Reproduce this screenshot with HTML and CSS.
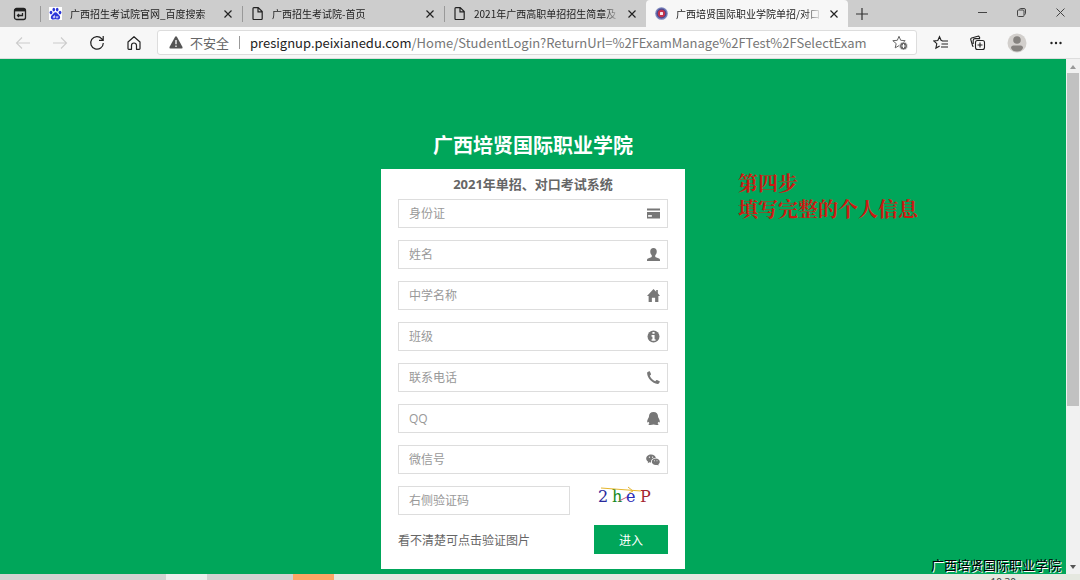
FILE: index.html
```html
<!DOCTYPE html>
<html lang="zh-CN">

<head>
    <meta charset="UTF-8">
    <meta name="viewport" content="width=device-width, initial-scale=1.0">
    <title>广西培贤国际职业学院单招/对口考试系统</title>
    <link rel="stylesheet" href="styles.css">
</head>

<body>
    <header class="tabs">
        <button class="tab-menu" type="button" aria-label="标签页操作">
            <svg width="14" height="14" viewBox="0 0 14 14" fill="none" stroke="#222" stroke-width="1.3">
                <rect x="1.5" y="1.5" width="11" height="11" rx="2" />
                <path d="M1.5 3.2h11" stroke-width="2.4" />
                <path d="M9.5 6v2.5h-5M6 7L4.500 8.500 6 10" />
            </svg>
        </button>
        <div class="tab">
            <svg class="tab-icon" width="13" height="13" viewBox="0 0 13 13">
                <rect width="13" height="13" fill="#fff" />
                <g fill="#2b35d8">
                    <ellipse cx="2" cy="5.600" rx="1.400" ry="1.800" />
                    <ellipse cx="4.800" cy="2.600" rx="1.300" ry="1.900" />
                    <ellipse cx="8.200" cy="2.600" rx="1.300" ry="1.900" />
                    <ellipse cx="11" cy="5.600" rx="1.400" ry="1.800" />
                    <path d="M6.500 5.200c1.700 0 2 1.500 3.200 2.500 2.400 2 1.500 4.800-.6 4.800-1 0-1.500-.3-2.600-.3s-1.600.3-2.600.3c-2.100 0-3-2.800-.6-4.800C4.500 6.700 4.800 5.200 6.500 5.200z" />
                </g>
                <path d="M5.500 8.300v2.500H4.300V9.500h1M7.200 9v1.800h1.600V9" fill="none" stroke="#fff" stroke-width=".7" />
            </svg>
            <span class="tab-title">广西招生考试院官网_百度搜索</span>
            <button class="tab-close" type="button" aria-label="关闭">
                <svg width="8" height="8" viewBox="0 0 8 8"><path d="M.5.5l7 7m0-7l-7 7" stroke="#222" stroke-width="1.2" /></svg>
            </button>
        </div>
        <div class="tab">
            <svg class="tab-icon" width="13" height="13" viewBox="0 0 13 13" fill="none" stroke="#222" stroke-width="1.2">
                <path d="M2 1.500q0-.9.9-.9h4.300l4 4v7q0 .9-.9.9H2.900q-.9 0-.9-.9zM7 .600v4.200h4.200" />
            </svg>
            <span class="tab-title">广西招生考试院-首页</span>
            <button class="tab-close" type="button" aria-label="关闭">
                <svg width="8" height="8" viewBox="0 0 8 8"><path d="M.5.5l7 7m0-7l-7 7" stroke="#222" stroke-width="1.2" /></svg>
            </button>
        </div>
        <div class="tab">
            <svg class="tab-icon" width="13" height="13" viewBox="0 0 13 13" fill="none" stroke="#222" stroke-width="1.2">
                <path d="M2 1.500q0-.9.9-.9h4.300l4 4v7q0 .9-.9.9H2.900q-.9 0-.9-.9zM7 .600v4.200h4.200" />
            </svg>
            <span class="tab-title">2021年广西高职单招招生简章及</span>
            <button class="tab-close" type="button" aria-label="关闭">
                <svg width="8" height="8" viewBox="0 0 8 8"><path d="M.5.5l7 7m0-7l-7 7" stroke="#222" stroke-width="1.2" /></svg>
            </button>
        </div>
        <div class="tab active">
            <svg class="tab-icon" width="13" height="13" viewBox="0 0 13 13">
                <circle cx="6.500" cy="6.500" r="6.300" fill="#7d86bd" />
                <circle cx="6.500" cy="6.500" r="5" fill="#4a4a92" />
                <circle cx="6.500" cy="6.500" r="3.700" fill="#c3334d" />
                <rect x="5" y="5" width="3" height="3" rx=".5" fill="#fbe9ec" />
            </svg>
            <span class="tab-title">广西培贤国际职业学院单招/对口</span>
            <button class="tab-close" type="button" aria-label="关闭">
                <svg width="8" height="8" viewBox="0 0 8 8"><path d="M.5.5l7 7m0-7l-7 7" stroke="#222" stroke-width="1.2" /></svg>
            </button>
        </div>
        <button class="new-tab" type="button" aria-label="新建标签页">
            <svg width="12" height="12" viewBox="0 0 12 12"><path d="M6 0v12M0 6h12" stroke="#333" stroke-width="1.2" /></svg>
        </button>
        <div class="window-buttons">
            <button type="button" aria-label="最小化">
                <svg width="9" height="9" viewBox="0 0 9 9"><path d="M0 4.500h9" stroke="#444" /></svg>
            </button>
            <button type="button" aria-label="还原">
                <svg width="9" height="9" viewBox="0 0 9 9" fill="none" stroke="#444">
                    <rect x=".5" y="2" width="6.500" height="6.500" rx="1" />
                    <path d="M2.500 1.500q0-1 1-1H7q1.500 0 1.500 1.500v3.500q0 1-1 1" />
                </svg>
            </button>
            <button type="button" aria-label="关闭窗口">
                <svg width="9" height="9" viewBox="0 0 9 9"><path d="M.5.5l8 8m0-8l-8 8" stroke="#444" /></svg>
            </button>
        </div>
    </header>

    <nav class="toolbar">
        <div class="nav-buttons">
            <button type="button" aria-label="后退" disabled>
                <svg width="16" height="16" viewBox="0 0 16 16" fill="none" stroke="#ccc" stroke-width="1.100"><path d="M15 8H2m5-5.500L1.500 8 7 13.500" /></svg>
            </button>
            <button type="button" aria-label="前进" disabled>
                <svg width="16" height="16" viewBox="0 0 16 16" fill="none" stroke="#ccc" stroke-width="1.100"><path d="M1 8h13M9 2.500L14.500 8 9 13.500" /></svg>
            </button>
            <button type="button" aria-label="刷新">
                <svg width="16" height="16" viewBox="0 0 16 16" fill="none" stroke="#222" stroke-width="1.200"><path d="M14.300 8a6.300 6.300 0 1 1-1.500-4.200L14 5.200M14.200 1v4.300H10" /></svg>
            </button>
            <button type="button" aria-label="主页">
                <svg width="16" height="16" viewBox="0 0 16 16" fill="none" stroke="#222" stroke-width="1.200" stroke-linejoin="round"><path d="M2 7l6-5.300L14 7v6.500q0 .8-.8.8h-2.700V10.500a2.500 2.500 0 0 0-5 0v3.800H2.800q-.8 0-.8-.8z" /></svg>
            </button>
        </div>
        <div class="address">
            <svg width="14" height="13" viewBox="0 0 14 13"><path d="M7 .3q.6 0 1 .7l5.500 10q.5 1.500-1 1.500h-11q-1.500 0-1-1.500L6 1q.4-.7 1-.7z" fill="#555" /><path d="M7 4v4.200M7 9.500V11" stroke="#fff" stroke-width="1.300" /></svg>
            <span class="insecure">不安全</span>
            <span class="url"><b>presignup.peixianedu.com</b>/Home/StudentLogin?ReturnUrl=%2FExamManage%2FTest%2FSelectExam</span>
            <button class="favourite" type="button" aria-label="添加到收藏夹">
                <svg width="16" height="16" viewBox="0 0 16 16"><path d="M7 1.300l1.700 4 4.500.4-3.400 2.900 1 4.200L7 10.600l-3.800 2.300 1-4.300L.8 5.700l4.500-.4z" fill="none" stroke="#666" /><circle cx="11.500" cy="11" r="4" fill="#666" stroke="#fff" stroke-width=".7" /><path d="M11.500 9v4m-2-2h4" stroke="#fff" /></svg>
            </button>
        </div>
        <div class="tools">
            <button type="button" aria-label="收藏夹">
                <svg width="16" height="16" viewBox="0 0 16 16" fill="none" stroke="#222" stroke-width="1.100"><path d="M9.500 5.700L8.200 5.500 6.500 1.700 4.800 5.500l-4 .4 3 2.800-.9 4.400 3.800-2.200M9 6h6M8.500 9h6.500M8 12h7" /></svg>
            </button>
            <button type="button" aria-label="集锦">
                <svg width="16" height="16" viewBox="0 0 16 16" fill="none" stroke="#222" stroke-width="1.100"><rect x="5.500" y="5.500" width="9" height="9" rx="2" /><path d="M10 7.500v5M7.500 10h5M3.500 11.500q-.8-.2-1-1L.8 4.700Q.4 3.400 1.600 2.900L7.800 1.200q1.200-.2 1.600.9l.5 1.200M3.200 9V5.500q0-1.900 1.900-1.900h5" /></svg>
            </button>
            <button type="button" aria-label="个人资料">
                <svg width="20" height="20" viewBox="0 0 20 20"><circle cx="10" cy="10" r="9.500" fill="#d2cfcc" /><circle cx="10" cy="7" r="3.800" fill="#85827f" /><path d="M4 15q0-2.500 2.500-2.500h7Q16 12.500 16 15q-1.500 3.500-6 3.500T4 15z" fill="#85827f" /></svg>
            </button>
            <button type="button" aria-label="设置及其他">
                <svg width="16" height="16" viewBox="0 0 16 16" fill="#222"><circle cx="3.500" cy="8" r="1.200" /><circle cx="8" cy="8" r="1.200" /><circle cx="12.500" cy="8" r="1.200" /></svg>
            </button>
        </div>
    </nav>

    <div class="viewport">
        <main class="page">
            <h1>广西培贤国际职业学院</h1>
            <form class="login-box" method="post">
                <h2>2021年单招、对口考试系统</h2>
                <div class="field">
                    <input type="text" placeholder="身份证" aria-label="身份证">
                    <svg width="13" height="13" viewBox="0 0 12 12" fill="#777"><path d="M0 1.300h12v1.900H0zM0 4.500h12v6H0z" /><path d="M1 7.500h3.500v1.500H1z" fill="#fff" /></svg>
                </div>
                <div class="field">
                    <input type="text" placeholder="姓名" aria-label="姓名">
                    <svg width="13" height="13" viewBox="0 0 12 12" fill="#777"><path d="M6 0c2 0 3 1.300 3 3.200 0 1.500-.6 2.700-1.400 3.500v1.100q0 .5.500.7l3 1.200q.9.400.9 1.300v1H0v-1q0-.9.900-1.300l3-1.200q.5-.2.500-.7V6.700C3.600 5.900 3 4.700 3 3.200 3 1.300 4 0 6 0z" /></svg>
                </div>
                <div class="field">
                    <input type="text" placeholder="中学名称" aria-label="中学名称">
                    <svg width="13" height="13" viewBox="0 0 12 12" fill="#777"><path d="M6 0l2.500 2.500V1H10v3l2 2.500h-1.500V12h-3V8h-3v4h-3V6.500H0z" /></svg>
                </div>
                <div class="field">
                    <input type="text" placeholder="班级" aria-label="班级">
                    <svg width="13" height="13" viewBox="0 0 12 12"><circle cx="6" cy="6" r="5.500" fill="#777" /><path d="M5 1.800h2v1.700H5zM4.200 4.700H7v3.800h.9V10H4.200V8.500H5V6.200h-.8z" fill="#fff" /></svg>
                </div>
                <div class="field">
                    <input type="tel" placeholder="联系电话" aria-label="联系电话">
                    <svg width="13" height="13" viewBox="0 0 12 12" fill="#777"><path d="M.3 1.200L2 .2q.4-.2.7.2l1 2.400q.1.400-.2.700l-.9.800c.9 2.300 2.700 4.100 5 5.200l.9-1q.3-.3.700-.1l2.400 1.100q.4.300.2.700l-.9 1.300q-.4.500-1 .4C4.600 11.200.5 6.800.1 2q-.1-.5.200-.8z" /></svg>
                </div>
                <div class="field">
                    <input type="text" placeholder="QQ" aria-label="QQ">
                    <svg width="13" height="13" viewBox="0 0 12 12" fill="#777"><path d="M6 0c2.700 0 4.200 1.700 4.200 4.100 0 .5.100.8.400 1.300.7 1.300 1.300 2.500 1.200 3.700 0 .7-.7.600-1.300-.1-.1.600-.4 1-.8 1.400.7.300 1 .7.900 1.100-.3.700-3.200.6-4.600.1-1.400.5-4.300.6-4.600-.1-.1-.4.200-.8.900-1.100-.4-.4-.7-.8-.8-1.400-.6.700-1.300.8-1.300.1-.1-1.200.5-2.400 1.200-3.700.3-.5.400-.8.400-1.300C1.800 1.700 3.300 0 6 0z" /></svg>
                </div>
                <div class="field">
                    <input type="text" placeholder="微信号" aria-label="微信号">
                    <svg width="14" height="12" viewBox="0 0 14 12"><path d="M5 .5c2.600 0 4.500 1.600 4.800 3.400-3 0-5.300 2.100-4.700 4.600-.7 0-1.100-.1-1.700-.2L1.700 9.200l.4-1.500C.9 6.900.2 5.900.2 4.600.2 2.300 2.400.5 5 .5z" fill="#777" /><path d="M9.800 4.400c2.200 0 4 1.500 4 3.400 0 1-.6 1.900-1.500 2.600l.4 1.200-1.400-.7c-.5.100-1 .2-1.500.2-2.300 0-4-1.500-4-3.300s1.700-3.400 4-3.400z" fill="#777" /><g fill="#fff"><circle cx="3.400" cy="3.200" r=".6" /><circle cx="6.600" cy="3.200" r=".6" /><circle cx="8.500" cy="6.700" r=".5" /><circle cx="11" cy="6.700" r=".5" /></g></svg>
                </div>
                <div class="captcha-row">
                    <div class="field">
                        <input type="text" placeholder="右侧验证码" aria-label="右侧验证码">
                    </div>
                    <button class="captcha" type="button" aria-label="验证码">
                        <svg width="74" height="20" viewBox="0 0 74 20">
                            <g class="captcha-text">
                                <text x="4" y="16" fill="#2a2a9c">2</text>
                                <text x="18" y="16" fill="#15881c">h</text>
                                <text x="32" y="16" fill="#2a2ab8">e</text>
                                <text x="46" y="16" fill="#a42430">P</text>
                            </g>
                            <path d="M7 2l40 3M34 1l5 4-4 2" fill="none" stroke="#e5b62d" />
                            <path d="M25 15l8-4" stroke="#c55a7a" />
                        </svg>
                    </button>
                </div>
                <div class="submit-row">
                    <span>看不清楚可点击验证图片</span>
                    <button class="submit" type="submit">进入</button>
                </div>
            </form>
            <p class="note">第四步<br>填写完整的个人信息</p>
        </main>
        <div class="scrollbar">
            <svg width="6" height="4" viewBox="0 0 6 4"><path d="M3 0l3 4H0z" fill="#999" /></svg>
            <div class="thumb"></div>
            <svg width="6" height="4" viewBox="0 0 6 4"><path d="M0 0h6L3 4z" fill="#555" /></svg>
        </div>
    </div>

    <footer class="taskbar">
        <span class="task-search"></span>
        <span class="task-view"></span>
        <span class="task-items"></span>
        <span class="task-alert"></span>
        <time>10:30</time>
    </footer>
    <div class="watermark">广西培贤国际职业学院</div>
</body>

</html>
```
FILE: styles.css
```css
* {
    box-sizing: border-box;
}

body {
    margin: 0;
    height: 100vh;
    display: flex;
    flex-direction: column;
    overflow: hidden;
    font-family: "Open Sans", "Noto Sans CJK SC", sans-serif;
    font-size: 12px;
    background: #f7f7f7;
}

button {
    display: flex;
    align-items: center;
    justify-content: center;
    padding: 0;
    border: none;
    background: none;
    font-family: inherit;
    cursor: pointer;
}

svg {
    display: block;
    flex: none;
}

/* Tab strip */
.tabs {
    display: flex;
    flex: none;
    height: 27px;
    background: #cdcdcd;
}

.tab-menu {
    width: 40px;
}

.tab {
    display: flex;
    align-items: center;
    flex: 0 1 202px;
    min-width: 0;
    padding: 0 10px 0 9px;
    background: linear-gradient(#999, #999) left center / 1px 16px no-repeat;
}

.tab.active {
    background: #f7f7f7;
    border-radius: 4px 4px 0 0;
}

.tab-title {
    flex: 1;
    margin: 0 8px;
    overflow: hidden;
    white-space: nowrap;
    font-family: "Noto Sans CJK SC", sans-serif;
    font-size: 10px;
    line-height: 16px;
    color: #222;
    -webkit-mask-image: linear-gradient(to left, transparent, #000 16px);
    mask-image: linear-gradient(to left, transparent, #000 16px);
}

.tab-close {
    width: 8px;
    height: 16px;
}

.new-tab {
    width: 28px;
}

.window-buttons {
    display: flex;
    margin-left: auto;
}

.window-buttons button {
    width: 39px;
    height: 24px;
}

/* Toolbar */
.toolbar {
    display: flex;
    align-items: center;
    flex: none;
    height: 32px;
    border-bottom: 1px solid #ddd;
}

.nav-buttons {
    display: flex;
    gap: 21px;
    padding: 0 15px;
}

.address {
    display: flex;
    align-items: center;
    flex: 1;
    min-width: 0;
    height: 25px;
    padding: 0 8px 0 11px;
    background: #fff;
    border: 1px solid #ddd;
    border-radius: 3px;
    font-size: 13px;
    line-height: 18px;
    white-space: nowrap;
}

.insecure {
    margin-left: 7px;
    padding-right: 11px;
    color: #666;
    background: linear-gradient(#999, #999) right center / 1px 13px no-repeat;
}

.url {
    flex: 1;
    margin-left: 10px;
    overflow: hidden;
    font-family: "Noto Sans CJK SC", sans-serif;
    color: #777;
}

.url b {
    font-weight: normal;
    color: #222;
}

.tools {
    display: flex;
    align-items: center;
    gap: 21px;
    padding: 0 16px;
}

/* Login page */
.viewport {
    display: flex;
    flex: 1;
    min-height: 0;
}

.page {
    position: relative;
    flex: 1;
    padding-top: 71px;
    overflow: hidden;
    background: #00a65a;
}

h1 {
    margin: 0 0 7px;
    font-size: 20px;
    line-height: 32px;
    text-align: center;
    color: #fff;
}

.login-box {
    width: 304px;
    margin: 0 auto;
    padding: 5px 17px 15px;
    background: #fff;
    color: #666;
}

h2 {
    margin: 0 0 5px;
    font-size: 13px;
    line-height: 20px;
    text-align: center;
}

.field {
    display: flex;
    align-items: center;
    height: 29px;
    margin-bottom: 12px;
    padding: 0 7px 0 10px;
    border: 1px solid #ddd;
}

.field input {
    flex: 1;
    min-width: 0;
    padding: 0;
    border: none;
    outline: none;
    background: none;
    font-family: inherit;
    font-size: 12px;
    color: #555;
}

.field input::placeholder {
    color: #999;
}

.captcha-row {
    display: flex;
    justify-content: space-between;
}

.captcha-row .field {
    width: 172px;
    margin-bottom: 10px;
}

.captcha {
    width: 74px;
    height: 20px;
}

.captcha-text {
    font-family: "DejaVu Serif", serif;
    font-size: 16px;
}

.submit-row {
    display: flex;
    align-items: center;
    justify-content: space-between;
}

.submit {
    width: 74px;
    height: 29px;
    background: #00a65a;
    font-size: 12px;
    color: #fff;
}

.note {
    position: absolute;
    top: 112px;
    left: 738px;
    margin: 0;
    font-family: "Liberation Serif", "Noto Serif CJK SC", "Noto Sans CJK SC", serif;
    font-size: 20px;
    font-weight: bold;
    line-height: 26px;
    color: #cc1a12;
}

.scrollbar {
    display: flex;
    flex-direction: column;
    align-items: center;
    flex: none;
    width: 14px;
    padding: 6px 0 5px;
    background: #f1f1f1;
}

.thumb {
    width: 12px;
    height: 66%;
    margin: 4px 0 auto;
    background: #c1c1c1;
}

/* Taskbar */
.taskbar {
    display: flex;
    flex: none;
    height: 6px;
    overflow: hidden;
    background: #e5e8e0;
}

.task-search {
    width: 166px;
    background: #d3d3d3;
}

.task-view {
    width: 41px;
    background: #eee;
}

.task-items {
    width: 86px;
    background: #d3d3d3;
}

.task-alert {
    width: 41px;
    background: #fda766;
}

.taskbar time {
    margin: 1px 64px 0 auto;
    font-size: 10px;
    line-height: 14px;
    color: #333;
}

.watermark {
    position: absolute;
    right: 19px;
    bottom: 5px;
    font-size: 13px;
    line-height: 20px;
    color: #000;
    text-shadow: 1px 1px 0 #fff;
}
```
